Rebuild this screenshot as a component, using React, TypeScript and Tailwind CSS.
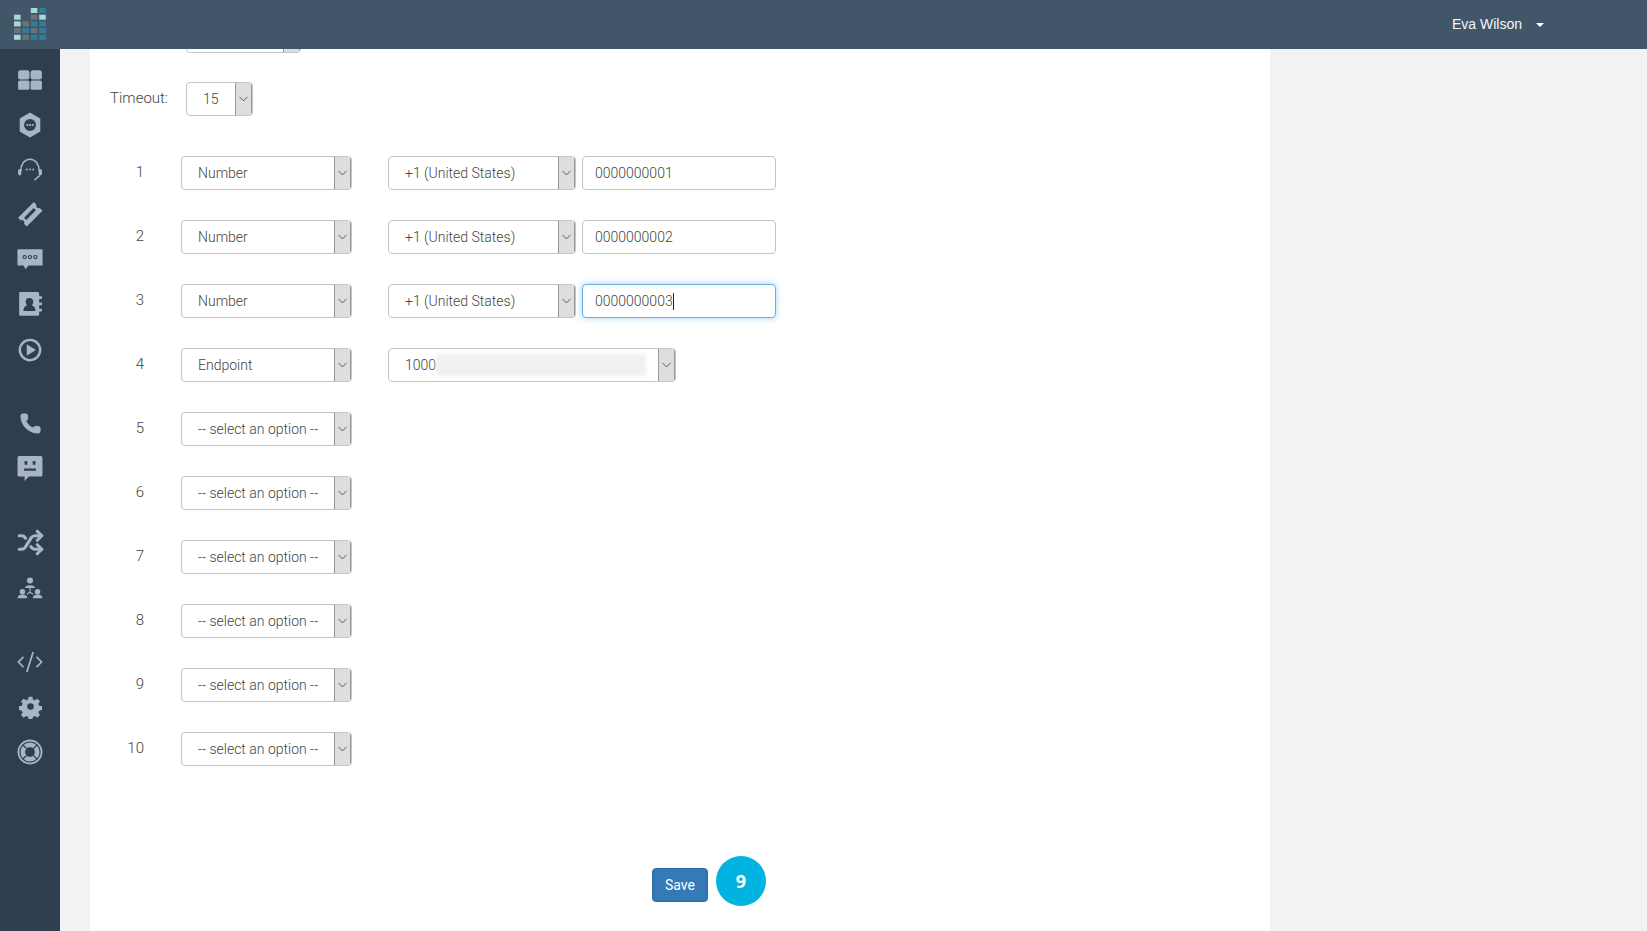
import { ChevronDown, CodeXml, Phone, Shuffle } from "lucide-react";
import type { ReactNode } from "react";

const cellColors = {
  l: "#a5dad6",
  g: "#6b7378",
  t: "#2f7f98",
};

// col, row, colour
const logoCells: [number, number, keyof typeof cellColors][] = [
  [0, 1, "l"], [0, 2, "l"], [0, 3, "g"], [0, 4, "l"],
  [1, 2, "g"], [1, 3, "t"], [1, 4, "g"],
  [2, 0, "l"], [2, 1, "g"], [2, 2, "t"], [2, 3, "g"], [2, 4, "t"],
  [3, 0, "t"], [3, 1, "l"], [3, 2, "t"], [3, 3, "t"], [3, 4, "t"],
];

function Logo() {
  return (
    <svg width="34" height="34" viewBox="0 0 34 34">
      {logoCells.map(([c, r, k]) => (
        <rect key={`${c}-${r}`} x={c * 8.4} y={r * 6.7} width="6.6" height="5" fill={cellColors[k]} />
      ))}
    </svg>
  );
}

function Glyph({ children, size = 26 }: { children: ReactNode; size?: number }) {
  return (
    <svg width={size} height={size} viewBox="0 0 24 24" fill="currentColor">
      {children}
    </svg>
  );
}

const iconGroups: ReactNode[][] = [
  [
    <Glyph key="dash">
      <rect x="1" y="3" width="10.5" height="8.5" rx="2" />
      <rect x="12.5" y="3" width="10.5" height="8.5" rx="2" />
      <rect x="1" y="12.5" width="10.5" height="8.5" rx="1.5" />
      <rect x="12.5" y="12.5" width="10.5" height="8.5" rx="1.5" />
    </Glyph>,
    <Glyph key="hex">
      <path fillRule="evenodd" d="M12 .5 21.500 6v12L12 23.500 2.500 18V6ZM12 6.500a5.500 5.500 0 1 0 0 11 5.500 5.500 0 0 0 0-11Z" />
      <circle cx="9.500" cy="12" r="1" />
      <circle cx="12" cy="12" r="1" />
      <circle cx="14.500" cy="12" r="1" />
    </Glyph>,
    <Glyph key="headset">
      <g transform="translate(0 -1.500)">
        <path d="M3.500 14.500C3.500 8 7 3.500 12 3.500S20.500 8 20.500 14.500" fill="none" stroke="currentColor" strokeWidth="1.400" />
        <rect x="1" y="12.500" width="3" height="6" rx="1.500" />
        <rect x="20" y="12.500" width="3" height="6" rx="1.500" />
        <path d="M21 18.500 16 23" fill="none" stroke="currentColor" strokeWidth="1.400" />
        <circle cx="9" cy="13" r="0.900" />
        <circle cx="12" cy="13" r="0.900" />
        <circle cx="15" cy="13" r="0.900" />
      </g>
    </Glyph>,
    <Glyph key="ticket">
      <g transform="translate(0 -1)">
        <path fillRule="evenodd" d="M15.500 1 18 3.500a2.200 2.200 0 0 0 3 3L23.500 9 9 23.500 6.500 21a2.200 2.200 0 0 0-3-3L1 15.500ZM15.500 6.500 6.500 15.500 8.500 17.500 17.500 8.500Z" />
      </g>
    </Glyph>,
    <Glyph key="chat">
      <g transform="translate(0 -1.500)">
        <path fillRule="evenodd" d="M1 3.500h22a.6.600 0 0 1 .6.600V18a.6.600 0 0 1-.6.600H10.500L8 22l-2-3.400H1A.6.600 0 0 1 .4 18V4.100a.6.600 0 0 1 .6-.6ZM7 8.800a2 2 0 1 0 0 4 2 2 0 0 0 0-4Zm5 0a2 2 0 1 0 0 4 2 2 0 0 0 0-4Zm5 0a2 2 0 1 0 0 4 2 2 0 0 0 0-4Z" />
        <circle cx="7" cy="10.800" r="1" />
        <circle cx="12" cy="10.800" r="1" />
        <circle cx="17" cy="10.800" r="1" />
      </g>
    </Glyph>,
    <Glyph key="contacts">
      <g transform="translate(0 -1)">
        <path fillRule="evenodd" d="M3 1h16a1.500 1.500 0 0 1 1.500 1.500V5H23v2.500h-2.500v3.200H23v2.500h-2.500v3.300H23V19h-2.500v2.500A1.500 1.500 0 0 1 19 23H3a1 1 0 0 1-1-1V2a1 1 0 0 1 1-1Zm8.500 5.500a3.500 3.500 0 0 0-3.500 3.500c0 1.500.7 2.600 1.500 3.200C7.500 14 6 15 6 18.500h11c0-3.500-1.500-4.500-3.500-5.300.8-.6 1.500-1.700 1.500-3.200a3.500 3.500 0 0 0-3.500-3.500Z" />
      </g>
    </Glyph>,
    <Glyph key="play">
      <path fillRule="evenodd" d="M12 1.500a10.500 10.500 0 1 1 0 21 10.500 10.500 0 0 1 0-21Zm0 2.200a8.300 8.300 0 1 0 0 16.600 8.300 8.300 0 0 0 0-16.600Z" />
      <path d="M9 6.800 17.500 12 9 17.200Z" />
    </Glyph>,
  ],
  [
    <Phone key="phone" size={23} fill="currentColor" strokeWidth={1} />,
    <Glyph key="face">
      <g transform="translate(0 -1)">
        <path fillRule="evenodd" d="M2 1h20a1.500 1.500 0 0 1 1.500 1.500v16A1.500 1.500 0 0 1 22 20H11l-4 4v-4H2A1.500 1.500 0 0 1 .5 18.500v-16A1.500 1.500 0 0 1 2 1Zm5 4.500v3.500h2.500V5.500Zm7.500 0v3.500H17V5.500ZM6.500 12.500v2h11v-2Z" />
      </g>
    </Glyph>,
  ],
  [
    <Shuffle key="shuffle" size={27} strokeWidth={2.800} />,
    <Glyph key="org">
      <circle cx="12" cy="5" r="2.800" />
      <path d="M7.500 12a4.500 2.500 0 0 1 9 0Z" />
      <circle cx="5" cy="15.500" r="2.500" />
      <path d="M.5 21.500c0-2.500 2-3.500 4.500-3.500s4.500 1 4.500 3.500Z" />
      <circle cx="19" cy="15.500" r="2.500" />
      <path d="M14.500 21.500c0-2.500 2-3.500 4.500-3.500s4.500 1 4.500 3.500Z" />
      <path d="M12 12v4M12 16l-3 1.800M12 16l3 1.800" fill="none" stroke="currentColor" strokeWidth="1" />
    </Glyph>,
  ],
  [
    <CodeXml key="code" size={28} strokeWidth={1.500} />,
    <Glyph key="gear" size={25}>
      <path fillRule="evenodd" d="M10 1.500h4l.6 3 2.100.9 2.600-1.700 2.800 2.800-1.700 2.600.9 2.100 3 .6v4l-3 .6-.9 2.100 1.700 2.600-2.800 2.800-2.600-1.700-2.100.9-.6 3h-4l-.6-3-2.100-.9-2.600 1.700-2.800-2.800 1.700-2.600-.9-2.100-3-.6v-4l3-.6.9-2.100-1.700-2.600 2.800-2.800 2.600 1.700 2.100-.9ZM12 8.500a3.500 3.500 0 1 0 0 7 3.500 3.500 0 0 0 0-7Z" transform="translate(1.200 1.200) scale(.9)" />
    </Glyph>,
    <Glyph key="buoy">
      <path fillRule="evenodd" d="M12 .5a11.500 11.500 0 1 1 0 23 11.500 11.500 0 0 1 0-23ZM12 7.500a4.500 4.500 0 1 0 0 9 4.500 4.500 0 0 0 0-9Z" />
      <circle cx="12" cy="12" r="9.300" fill="none" stroke="#2e3e4e" strokeWidth="1" />
      <path d="M5.400 5.400 8.800 8.800M18.600 5.400 15.200 8.800M5.400 18.600 8.800 15.200M18.600 18.600 15.200 15.200" fill="none" stroke="#2e3e4e" strokeWidth="1.200" />
    </Glyph>,
  ],
];

function Sidebar() {
  return (
    <aside className="flex w-[60px] shrink-0 flex-col gap-[29px] bg-[#2e3e4e] pt-2 text-[#a9b4c9]">
      {iconGroups.map((group, i) => (
        <div key={i} className="flex flex-col">
          {group.map((icon, j) => (
            <div key={j} className="flex h-[45px] items-center justify-center">
              {icon}
            </div>
          ))}
        </div>
      ))}
    </aside>
  );
}

function Select({ value, className, children }: { value?: string; className: string; children?: ReactNode }) {
  return (
    <div className={`flex h-[34px] shrink-0 items-stretch overflow-hidden rounded-[4px] border border-[#c4c4c4] bg-white ${className}`}>
      <div className="flex min-w-0 flex-1 items-center pl-4 whitespace-nowrap">
        {value}
        {children}
      </div>
      <div className="flex w-[17px] shrink-0 items-center justify-center border-x border-[#9a9a9a] bg-[#dedede] text-[#333]">
        <ChevronDown size={16} strokeWidth={1.250} />
      </div>
    </div>
  );
}

type Row =
  | { type: "Number"; phone: string; focused?: boolean }
  | { type: "Endpoint" }
  | { type: "-- select an option --" };

const rows: Row[] = [
  { type: "Number", phone: "0000000001" },
  { type: "Number", phone: "0000000002" },
  { type: "Number", phone: "0000000003", focused: true },
  { type: "Endpoint" },
  { type: "-- select an option --" },
  { type: "-- select an option --" },
  { type: "-- select an option --" },
  { type: "-- select an option --" },
  { type: "-- select an option --" },
  { type: "-- select an option --" },
];

function RowDetail({ row }: { row: Row }) {
  if (row.type === "Endpoint") {
    return (
      <Select className="ml-9 w-[288px]" value="1000">
        <span className="h-[22px] w-[210px] bg-[#f0f0f0] blur-[2px]" />
      </Select>
    );
  }
  if (row.type !== "Number") return null;
  return (
    <>
      <Select className="ml-9 w-[188px]" value="+1 (United States)" />
      {row.focused ? (
        <div className="ml-1.5 flex h-[34px] w-[194px] items-center rounded-[4px] border border-[#66afe9] bg-white pl-3 shadow-[0_0_6px_rgba(102,175,233,0.6)]">
          {row.phone}
          <span className="h-[17px] w-px bg-[#222]" />
        </div>
      ) : (
        <div className="ml-1.5 flex h-[34px] w-[194px] items-center rounded-[4px] border border-[#c4c4c4] bg-white pl-3">
          {row.phone}
        </div>
      )}
    </>
  );
}

export default function App() {
  return (
    <div className="flex h-screen flex-col overflow-hidden bg-[#f2f2f2] font-['Roboto',sans-serif] text-[14px] font-light text-[#444]">
      <header className="flex h-[49px] shrink-0 items-center justify-between bg-[#42566a] pl-[14px] pr-[103px]">
        <Logo />
        <div className="flex items-center gap-[14px] text-[#f4f6f8]">
          <span className="font-['Liberation_Sans',sans-serif] text-[14px] font-normal">Eva Wilson</span>
          <span className="h-0 w-0 border-x-[4px] border-t-[4px] border-x-transparent border-t-white" />
        </div>
      </header>
      <div className="flex min-h-0 flex-1">
        <Sidebar />
        <main className="min-w-0 flex-1 pl-[30px]">
          <div className="h-full w-[1180px] bg-white pl-5">
            <div className="flex h-1 items-end overflow-hidden pl-[76px]">
              <Select className="w-[115px]" />
            </div>
            <div className="mt-[29px] flex items-center">
              <span className="w-[76px] pb-[2px] text-[15px]">Timeout:</span>
              <Select className="w-[67px]" value="15" />
            </div>
            <div className="mt-10 flex flex-col gap-[30px]">
              {rows.map((row, i) => (
                <div key={i} className="flex items-center">
                  <span className="w-[34px] pb-[1px] text-right text-[15px]">{i + 1}</span>
                  <Select className="ml-[37px] w-[171px]" value={row.type} />
                  <RowDetail row={row} />
                </div>
              ))}
            </div>
            <div className="mt-[90px] flex items-end pl-[542px]">
              <button className="h-[34px] w-14 rounded-[4px] border border-[#2e6da4] bg-[#337ab7] font-normal text-white">
                Save
              </button>
              <div className="mb-[-4px] ml-2 flex size-[50px] items-center justify-center rounded-full bg-[#00b3e0] font-['Open_Sans',sans-serif] text-[18px] font-bold text-white">
                9
              </div>
            </div>
          </div>
        </main>
      </div>
    </div>
  );
}
